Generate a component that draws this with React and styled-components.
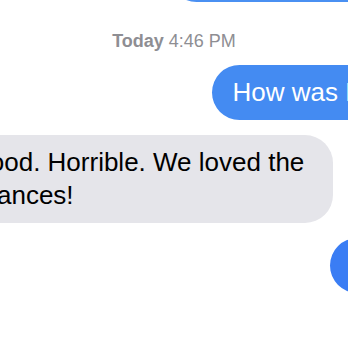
import React from "react";
import styled, { createGlobalStyle } from "styled-components";

const GlobalStyle = createGlobalStyle`
  html, body {
    margin: 0;
    padding: 0;
    background: #ffffff;
  }
  body {
    font-family: "Liberation Sans", Arial, sans-serif;
    overflow: hidden;
  }
`;

const Viewport = styled.div`
  width: 348px;
  height: 348px;
  overflow: hidden;
  background: #ffffff;
`;

const Thread = styled.div`
  width: 549px;
  margin: -53px 0 0 -102px;
  padding: 0 12.5px;
  box-sizing: border-box;
  display: flex;
  flex-direction: column;
`;

const Timestamp = styled.div`
  align-self: center;
  margin: 28px 0 13px;
  padding-left: 3px;
  font-size: 18px;
  line-height: 22px;
  color: #8e8e93;
  white-space: nowrap;

  b {
    font-weight: 700;
  }
`;

const Bubble = styled.div`
  align-self: ${(p) => (p.$sent ? "flex-end" : "flex-start")};
  box-sizing: border-box;
  max-width: 422.5px;
  padding: 11px 20px;
  border-radius: 28px;
  font-size: 26px;
  line-height: 33px;
  background: ${(p) => (p.$sent ? p.$tone || "#448bf2" : "#e5e5ea")};
  color: ${(p) => (p.$sent ? "#ffffff" : "#000000")};

  & + & {
    margin-top: 15px;
  }
`;

export default function App() {
  return (
    <>
      <GlobalStyle />
      <Viewport>
        <Thread>
          <Bubble $sent $tone="#4a90f2">How is Ibiza going?</Bubble>
          <Timestamp>
            <b>Today</b> 4:46 PM
          </Timestamp>
          <Bubble $sent $tone="#448bf2">How was Ibiza?</Bubble>
          <Bubble>The food. Horrible. We loved the wild dances!</Bubble>
          <Bubble $sent $tone="#3a7df4">Wow!</Bubble>
        </Thread>
      </Viewport>
    </>
  );
}
